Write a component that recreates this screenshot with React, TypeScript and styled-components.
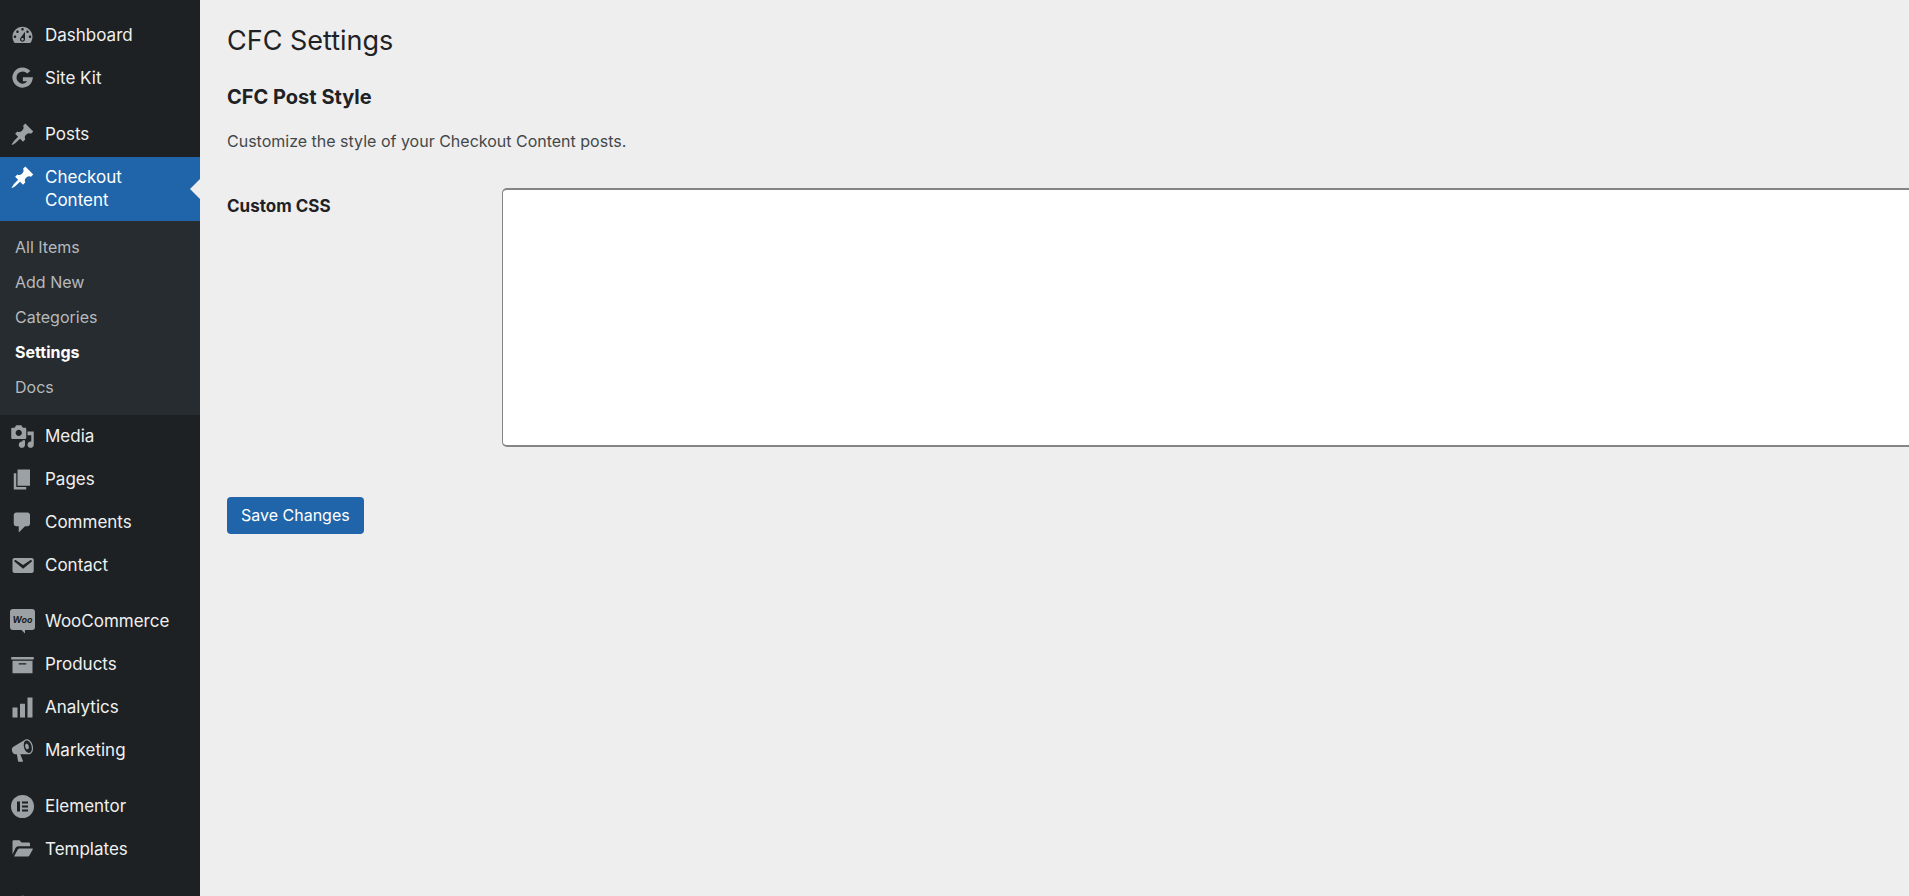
import React, { useState } from "react";
import styled, { createGlobalStyle, css } from "styled-components";

const color = {
  page: "#eeeeee",
  sidebar: "#1d2123",
  submenu: "#272c30",
  accent: "#2065a9",
  icon: "#9ca1a5",
  menuText: "#eff0f1",
  submenuText: "#b6babd",
  heading: "#1f2224",
  body: "#43474a",
  fieldBorder: "#858585",
};

const GlobalStyle = createGlobalStyle`
  *, *::before, *::after { box-sizing: border-box; }
  body {
    margin: 0;
    background: ${color.page};
    color: ${color.body};
    font-family: Inter, "Liberation Sans", sans-serif;
    font-size: 16px;
    line-height: 24px;
  }
`;

const Shell = styled.div`
  display: flex;
  min-height: 100vh;
`;

const Sidebar = styled.nav`
  position: sticky;
  top: 0;
  flex: 0 0 200px;
  height: 100vh;
  padding-top: 15px;
  overflow: hidden;
  background: ${color.sidebar};
`;

const MenuGroup = styled.ul`
  display: grid;
  gap: 1px;
  margin: 0 0 14px;
  padding: 0;
  list-style: none;
`;

const MenuLink = styled.a<{ $current?: boolean }>`
  position: relative;
  display: flex;
  align-items: flex-start;
  min-height: 42px;
  padding: 9px 12px 9px 0;
  color: ${color.menuText};
  font-size: 17px;
  line-height: 23px;
  text-decoration: none;

  ${(p) =>
    p.$current &&
    css`
      color: #ffffff;
      background: ${color.accent};

      &::after {
        content: "";
        position: absolute;
        top: 50%;
        right: 0;
        margin-top: -10px;
        border: 10px solid transparent;
        border-left-width: 0;
        border-right-color: ${color.page};
      }
    `}
`;

const IconSlot = styled.span<{ $current?: boolean }>`
  display: flex;
  flex: 0 0 45px;
  align-items: center;
  justify-content: center;
  height: 23px;
  color: ${(p) => (p.$current ? "#ffffff" : color.icon)};

  svg {
    flex: none;
    width: 25px;
    height: 25px;
    fill: currentColor;
  }
`;

const Submenu = styled.ul`
  margin: 0;
  padding: 9px 0 10px;
  list-style: none;
  background: ${color.submenu};
`;

const SubmenuLink = styled.a<{ $current?: boolean }>`
  display: block;
  padding: 5px 15px 6px;
  color: ${(p) => (p.$current ? "#ffffff" : color.submenuText)};
  font-size: 16px;
  font-weight: ${(p) => (p.$current ? 700 : 400)};
  line-height: 24px;
  text-decoration: none;
`;

const Content = styled.main`
  flex: 1;
  min-width: 0;
  padding: 23px 0 40px 27px;
`;

const PageTitle = styled.h1`
  margin: 0 0 25px;
  color: ${color.heading};
  font-size: 27px;
  font-weight: 400;
  line-height: 36px;
`;

const SectionTitle = styled.h2`
  margin: 0 0 19px;
  color: ${color.heading};
  font-size: 20px;
  font-weight: 700;
  line-height: 26px;
`;

const Description = styled.p`
  margin: 0 0 35px;
`;

const Field = styled.div`
  display: grid;
  grid-template-columns: 275px 1fr;
  margin-bottom: 50px;
`;

const FieldLabel = styled.label`
  padding-top: 6px;
  color: ${color.heading};
  font-size: 17px;
  font-weight: 700;
`;

const CssInput = styled.textarea`
  display: block;
  width: 100%;
  height: 259px;
  padding: 6px 10px;
  border: solid ${color.fieldBorder};
  border-width: 2px 0 2px 1px;
  border-radius: 5px 0 0 5px;
  background: #ffffff;
  color: ${color.heading};
  font: 16px/24px "Liberation Mono", monospace;
  resize: none;
`;

const SaveButton = styled.button`
  padding: 6px 14px 7px;
  border: 0;
  border-radius: 4px;
  background: ${color.accent};
  color: #ffffff;
  font: 400 16px/24px Inter, "Liberation Sans", sans-serif;
`;

const paths = {
  dashboard:
    "M3.76 16h12.48c1.1-1.37 1.76-3.11 1.76-5 0-4.42-3.58-8-8-8s-8 3.58-8 8c0 1.89.66 3.63 1.76 5zM10 4c.55 0 1 .45 1 1s-.45 1-1 1-1-.45-1-1 .45-1 1-1zM6 6c.55 0 1 .45 1 1s-.45 1-1 1-1-.45-1-1 .45-1 1-1zm8 0c.55 0 1 .45 1 1s-.45 1-1 1-1-.45-1-1 .45-1 1-1zm-5.37 5.55L12 7v6c0 1.1-.9 2-2 2s-2-.9-2-2c0-.57.24-1.08.63-1.45zM4 10c.55 0 1 .45 1 1s-.45 1-1 1-1-.45-1-1 .45-1 1-1zm12 0c.55 0 1 .45 1 1s-.45 1-1 1-1-.45-1-1 .45-1 1-1zm-5 3c0-.55-.45-1-1-1s-1 .45-1 1 .45 1 1 1 1-.45 1-1z",
  pin: "M10.44 3.02l1.82-1.82 6.36 6.35-1.83 1.82c-1.05-.68-2.48-.57-3.41.36l-.75.75c-.92.93-1.04 2.35-.35 3.41l-1.83 1.82-2.41-2.41-2.8 2.79c-.42.42-3.38 2.71-3.8 2.29s1.86-3.39 2.28-3.81l2.79-2.79L4.1 9.36l1.83-1.82c1.05.69 2.48.57 3.4-.36l.75-.75c.93-.92 1.05-2.35.36-3.41z",
  media:
    "M13 11V4c0-.55-.45-1-1-1h-1.67L9 1H5L3.67 3H2c-.55 0-1 .45-1 1v7c0 .55.45 1 1 1h10c.55 0 1-.45 1-1zM7 4.5c1.38 0 2.5 1.12 2.5 2.5S8.38 9.5 7 9.5 4.5 8.38 4.5 7 5.62 4.5 7 4.5zM14 6h5v10.5c0 1.38-1.12 2.5-2.5 2.5S14 17.88 14 16.5s1.12-2.5 2.5-2.5c.17 0 .34.02.5.05V9h-3V6zm-4 8.05V13h2v3.5c0 1.38-1.12 2.5-2.5 2.5S7 17.88 7 16.5 8.12 14 9.5 14c.17 0 .34.02.5.05z",
  pages: "M6 15V2h10v13H6zm-1 1h8v2H3V5h2v11z",
  comments:
    "M5 2h9c1.1 0 2 .9 2 2v7c0 1.1-.9 2-2 2h-2l-5 5v-5H5c-1.1 0-2-.9-2-2V4c0-1.1.9-2 2-2z",
  email:
    "M3.87 4h13.25C18.37 4 19 4.59 19 5.79v8.42c0 1.19-.63 1.79-1.88 1.79H3.87c-1.25 0-1.88-.6-1.88-1.79V5.79c0-1.2.63-1.79 1.88-1.79zm6.62 8.6l6.74-5.53c.24-.2.43-.66.13-1.07-.29-.41-.82-.42-1.17-.17l-5.7 3.86L4.8 5.83c-.35-.25-.88-.24-1.17.17-.3.41-.11.87.13 1.07z",
  archive: "M19 4v2H1V4h18zM2 7h16v10H2V7zm11 3V9H7v1h6z",
  chart: "M18 18V2h-4v16h4zm-6 0V7H8v11h4zm-6 0v-8H2v8h4z",
  megaphone:
    "M18.15 5.94c.46 1.62.38 3.22-.02 4.48-.42 1.28-1.26 2.18-2.3 2.48-.16.06-.26.06-.4.06-.06.02-.12.02-.18.02-.06.02-.14.02-.22.02h-6.8l2.22 5.5c.02.14-.06.26-.14.34-.08.1-.24.16-.34.16H6.95c-.1 0-.26-.06-.34-.16-.08-.08-.16-.2-.14-.34l-1-5.5H4.25l-.02-.02c-.5.06-1.08-.18-1.54-.62s-.88-1.08-1.06-1.88c-.24-.8-.2-1.56-.02-2.2.18-.62.58-1.08 1.06-1.3l.02-.02 9-5.4c.1-.06.18-.1.24-.16.06-.04.14-.08.24-.12.16-.08.28-.12.5-.18 1.04-.3 2.24.1 3.22.98s1.84 2.24 2.26 3.86zm-2.58 5.98h-.02c.4-.1.74-.34 1.04-.7.58-.7.86-1.76.86-3.04 0-.64-.1-1.3-.28-1.98-.34-1.36-1.02-2.5-1.78-3.24s-1.68-1.1-2.46-.88c-.82.22-1.4.96-1.7 2-.32 1.04-.28 2.36.06 3.72.38 1.36 1 2.5 1.8 3.24.78.74 1.62 1.1 2.48.88zm-2.54-7.42c.22-.04.42-.02.62.04.38.16.76.48 1.02 1s.42 1.2.42 1.78c0 .3-.04.56-.12.8-.18.48-.44.84-.86.94-.34.1-.8-.06-1.14-.4s-.64-.86-.78-1.5c-.18-.62-.12-1.24.02-1.72s.48-.84.82-.94z",
  folder:
    "M2 14V3.500c0-.6.4-1 1-1h4.600l1.600 1.800H15c.6 0 1 .4 1 1v2.100H7.200c-1.300 0-2.300.5-2.900 1.600zM3.200 15.500l2.800-5.100c.4-.8 1-1.200 1.900-1.200H17.600c.6 0 .8.4.5.900l-2.500 4.400c-.3.600-.8 1-1.600 1z",
  brush:
    "M14.48 11.06L7.41 3.99l1.5-1.5c.5-.56 2.3-.47 3.51.32 1.21.8 1.43 1.28 2.91 2.1 1.18.64 2.45 1.26 4.45.85zm-.71.71L6.7 4.7 4.93 6.47c-.39.39-.39 1.02 0 1.41l1.06 1.06c.39.39.39 1.03 0 1.42-.6.6-1.43 1.11-2.21 1.69-.35.26-.7.53-1.01.84C1.43 14.23.4 16.08 1.4 17.07c.99 1 2.84-.03 4.18-1.36.31-.31.58-.66.85-1.02.57-.78 1.08-1.61 1.69-2.21.39-.39 1.02-.39 1.41 0l1.06 1.06c.39.39 1.02.39 1.41 0z",
};

const Glyph = ({ name }: { name: keyof typeof paths }) => (
  <svg viewBox="0 0 20 20" aria-hidden="true">
    <path fillRule="evenodd" d={paths[name]} />
  </svg>
);

const SiteKitLogo = () => (
  <svg viewBox="0 0 20 20" aria-hidden="true">
    <path
      d="M15 5A6.500 6.500 0 1 0 16.400 10.600H10.300"
      fill="none"
      stroke="currentColor"
      strokeWidth="3.200"
    />
  </svg>
);

const WooLogo = () => (
  <svg viewBox="0 0 25 25" aria-hidden="true">
    <path d="M3 0h19a3 3 0 0 1 3 3v15a3 3 0 0 1-3 3h-7v3.500L11.500 21H3a3 3 0 0 1-3-3V3a3 3 0 0 1 3-3z" />
    <text
      x="12.500"
      y="14"
      textAnchor="middle"
      fontFamily="Inter, sans-serif"
      fontSize="9"
      fontWeight="700"
      fontStyle="italic"
      fill={color.sidebar}
    >
      Woo
    </text>
  </svg>
);

const ElementorLogo = () => (
  <svg viewBox="0 0 25 25" aria-hidden="true">
    <circle cx="12.500" cy="12.500" r="11.500" />
    <g fill={color.sidebar}>
      <rect x="7" y="7.500" width="3" height="10" />
      <rect x="12" y="7.500" width="6" height="2" />
      <rect x="12" y="11.500" width="6" height="2" />
      <rect x="12" y="15.500" width="6" height="2" />
    </g>
  </svg>
);

type Item = {
  label: string;
  icon: React.ReactNode;
  children?: string[];
  iconOnly?: boolean;
};

const menu: Item[][] = [
  [
    { label: "Dashboard", icon: <Glyph name="dashboard" /> },
    { label: "Site Kit", icon: <SiteKitLogo /> },
  ],
  [
    { label: "Posts", icon: <Glyph name="pin" /> },
    {
      label: "Checkout Content",
      icon: <Glyph name="pin" />,
      children: ["All Items", "Add New", "Categories", "Settings", "Docs"],
    },
    { label: "Media", icon: <Glyph name="media" /> },
    { label: "Pages", icon: <Glyph name="pages" /> },
    { label: "Comments", icon: <Glyph name="comments" /> },
    { label: "Contact", icon: <Glyph name="email" /> },
  ],
  [
    { label: "WooCommerce", icon: <WooLogo /> },
    { label: "Products", icon: <Glyph name="archive" /> },
    { label: "Analytics", icon: <Glyph name="chart" /> },
    { label: "Marketing", icon: <Glyph name="megaphone" /> },
  ],
  [
    { label: "Elementor", icon: <ElementorLogo /> },
    { label: "Templates", icon: <Glyph name="folder" /> },
  ],
  [{ label: "Appearance", icon: <Glyph name="brush" />, iconOnly: true }],
];

const MenuItem = ({ item }: { item: Item }) => {
  const current = Boolean(item.children);
  return (
    <li>
      <MenuLink
        href="#"
        $current={current}
        aria-label={item.iconOnly ? item.label : undefined}
      >
        <IconSlot $current={current}>{item.icon}</IconSlot>
        {!item.iconOnly && <span>{item.label}</span>}
      </MenuLink>
      {item.children && (
        <Submenu>
          {item.children.map((child) => (
            <li key={child}>
              <SubmenuLink
                href="#"
                $current={child === "Settings"}
                aria-current={child === "Settings" ? "page" : undefined}
              >
                {child}
              </SubmenuLink>
            </li>
          ))}
        </Submenu>
      )}
    </li>
  );
};

export default function App() {
  const [customCss, setCustomCss] = useState("");

  return (
    <>
      <GlobalStyle />
      <Shell>
        <Sidebar aria-label="Main menu">
          {menu.map((group) => (
            <MenuGroup key={group[0].label}>
              {group.map((item) => (
                <MenuItem key={item.label} item={item} />
              ))}
            </MenuGroup>
          ))}
        </Sidebar>
        <Content>
          <PageTitle>CFC Settings</PageTitle>
          <form onSubmit={(e) => e.preventDefault()}>
            <SectionTitle>CFC Post Style</SectionTitle>
            <Description>
              Customize the style of your Checkout Content posts.
            </Description>
            <Field>
              <FieldLabel htmlFor="custom-css">Custom CSS</FieldLabel>
              <CssInput
                id="custom-css"
                value={customCss}
                onChange={(e) => setCustomCss(e.target.value)}
              />
            </Field>
            <SaveButton type="submit">Save Changes</SaveButton>
          </form>
        </Content>
      </Shell>
    </>
  );
}
